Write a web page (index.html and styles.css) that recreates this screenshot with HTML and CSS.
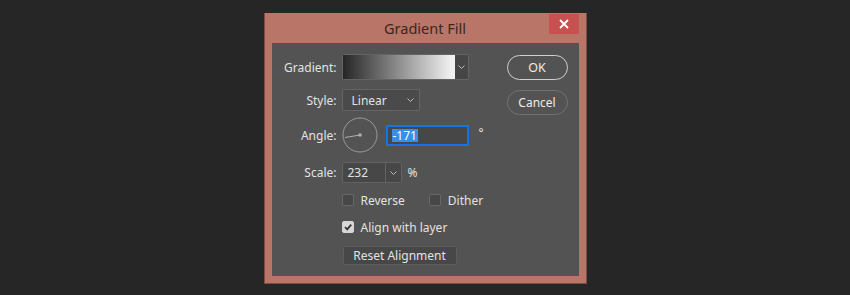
FILE: index.html
```html
<!doctype html>
<html lang="en">
<head>
    <meta charset="utf-8">
    <title>Gradient Fill</title>
    <link rel="stylesheet" href="styles.css">
</head>
<body class="ps-body">
<div class="ps-dialog">
    <div class="ps-titlebar">
        <span></span>
        <span class="ps-title">Gradient Fill</span>
        <button class="ps-close" aria-label="Close">
            <svg width="10" height="10" viewBox="0 0 10 10"><path d="M1 1 L9 9 M9 1 L1 9" stroke="#fff" stroke-width="1.8"/></svg>
        </button>
    </div>

    <div class="ps-panel">
        <div class="ps-form">
            <div class="ps-row ps-row-gradient">
                <span class="ps-label">Gradient:</span>
                <div class="ps-swatch">
                    <div class="ps-swatch-fill"></div>
                    <div class="ps-swatch-drop">
                        <svg width="7" height="4" viewBox="0 0 7 4"><polyline points="0.5,0.5 3.5,3.5 6.5,0.5" fill="none" stroke="#bdbdbd" stroke-width="1"/></svg>
                    </div>
                </div>
            </div>

            <div class="ps-row ps-row-style">
                <span class="ps-label">Style:</span>
                <div class="ps-select">
                    <span>Linear</span>
                    <svg width="7" height="4" viewBox="0 0 7 4"><polyline points="0.5,0.5 3.5,3.5 6.5,0.5" fill="none" stroke="#bdbdbd" stroke-width="1"/></svg>
                </div>
            </div>

            <div class="ps-row ps-row-angle">
                <span class="ps-label">Angle:</span>
                <svg class="ps-dial" width="36" height="36" viewBox="0 0 36 36">
                    <circle cx="18" cy="18" r="17" fill="none" stroke="#9a9a9a" stroke-width="1"/>
                    <line x1="18" y1="18" x2="3" y2="20.5" stroke="#b0b0b0" stroke-width="1"/>
                    <circle cx="18" cy="18" r="1.8" fill="#b0b0b0"/>
                </svg>
                <div class="ps-input ps-input-focus"><span class="ps-selected">-171</span></div>
                <span class="ps-unit ps-degree">°</span>
            </div>

            <div class="ps-row ps-row-scale">
                <span class="ps-label">Scale:</span>
                <div class="ps-combo">
                    <span class="ps-combo-value">232</span>
                    <span class="ps-combo-drop">
                        <svg width="7" height="4" viewBox="0 0 7 4"><polyline points="0.5,0.5 3.5,3.5 6.5,0.5" fill="none" stroke="#bdbdbd" stroke-width="1"/></svg>
                    </span>
                </div>
                <span class="ps-unit">%</span>
            </div>

            <div class="ps-checks ps-row-reverse">
                <label class="ps-check"><span class="ps-box"></span>Reverse</label>
                <label class="ps-check ps-check-dither"><span class="ps-box"></span>Dither</label>
            </div>

            <div class="ps-checks ps-row-align">
                <label class="ps-check">
                    <span class="ps-box ps-box-on">
                        <svg width="10" height="10" viewBox="0 0 10 10"><polyline points="2,5 4.2,7.4 8.2,2.6" fill="none" stroke="#333" stroke-width="1.8"/></svg>
                    </span>Align with layer
                </label>
            </div>

            <div class="ps-checks ps-row-reset">
                <button class="ps-reset">Reset Alignment</button>
            </div>
        </div>

        <div class="ps-buttons">
            <button class="ps-btn ps-btn-ok">OK</button>
            <button class="ps-btn ps-btn-cancel">Cancel</button>
        </div>
    </div>
</div>
</body>
</html>
```

FILE: styles.css
```css
.ps-body {
    margin: 0;
    background: #262626;
    font-family: "Noto Sans", "Open Sans", sans-serif;
    font-size: 12px;
    color: #e2e2e2;
}

.ps-dialog {
    width: 323px;
    margin: 13px auto 0;
    box-sizing: border-box;
    background: #b97567;
    border: 1px solid #7d4d44;
    border-top: 0;
    padding: 0 7px 7px;
}

.ps-titlebar {
    height: 30px;
    display: grid;
    grid-template-columns: 1fr auto 1fr;
    align-items: start;
}

.ps-title {
    font-size: 14.5px;
    color: #3b2722;
    line-height: 30px;
}

.ps-close {
    justify-self: end;
    width: 30px;
    height: 20px;
    margin-top: 1px;
    border: 0;
    padding: 0;
    background: #c75050;
    display: flex;
    align-items: center;
    justify-content: center;
}

.ps-panel {
    height: 233px;
    background: #535353;
    display: flex;
    box-sizing: border-box;
    padding-top: 11px;
}

.ps-form {
    width: 235px;
}

.ps-row {
    display: flex;
    align-items: center;
}

.ps-label {
    width: 65px;
    margin-right: 5px;
    text-align: right;
    flex: none;
}

.ps-row-gradient { height: 26px; }
.ps-row-style { height: 22px; margin-top: 9px; }
.ps-row-angle { height: 36px; margin-top: 6px; }
.ps-row-scale { height: 21px; margin-top: 9px; }

.ps-swatch {
    display: flex;
    width: 127px;
    height: 26px;
    box-sizing: border-box;
    border: 1px solid #646464;
    border-radius: 2px;
}

.ps-swatch-fill {
    flex: 1;
    background: linear-gradient(to right, #262626, #f1f1f1 97%);
}

.ps-swatch-drop {
    width: 13px;
    background: #464646;
    display: flex;
    align-items: center;
    justify-content: center;
}

.ps-select {
    width: 78px;
    height: 22px;
    box-sizing: border-box;
    border: 1px solid #656565;
    border-radius: 2px;
    background: #4a4a4a;
    display: flex;
    align-items: center;
    justify-content: space-between;
    padding: 0 5px 0 9px;
}

.ps-dial {
    flex: none;
}

.ps-input {
    width: 83px;
    height: 21px;
    margin-left: 8px;
    box-sizing: border-box;
    background: #474747;
    display: flex;
    align-items: center;
    padding-left: 4px;
}

.ps-input-focus {
    border: 2px solid #1473e6;
}

.ps-selected {
    background: #3a8ee6;
    color: #fff;
    line-height: 13px;
    padding: 0 1px;
}

.ps-unit {
    margin-left: 6px;
}

.ps-degree {
    margin-left: 10px;
    margin-top: -5px;
}

.ps-combo {
    display: flex;
    width: 60px;
    height: 21px;
    box-sizing: border-box;
    border: 1px solid #626262;
    border-radius: 2px;
    background: #474747;
}

.ps-combo-value {
    flex: 1;
    padding-left: 5px;
    line-height: 19px;
}

.ps-combo-drop {
    width: 15px;
    border-left: 1px solid #626262;
    display: flex;
    align-items: center;
    justify-content: center;
}

.ps-checks {
    display: flex;
    align-items: center;
    padding-left: 70px;
}

.ps-row-reverse { height: 12px; margin-top: 11px; }
.ps-row-align { height: 12px; margin-top: 15px; }
.ps-row-reset { height: 18px; margin-top: 13px; }

.ps-check {
    display: flex;
    align-items: center;
}

.ps-check-dither {
    margin-left: 24px;
}

.ps-box {
    width: 12px;
    height: 12px;
    box-sizing: border-box;
    border: 1px solid #686868;
    border-radius: 2px;
    background: #474747;
    margin-right: 7px;
    display: flex;
    align-items: center;
    justify-content: center;
}

.ps-box-on {
    background: #d6d6d6;
    border-color: #d6d6d6;
}

.ps-reset {
    width: 114px;
    height: 19px;
    margin-left: 1px;
    padding: 0;
    box-sizing: border-box;
    border: 1px solid #5c5c5c;
    border-radius: 2px;
    background: #474747;
    color: #e2e2e2;
    font: inherit;
}

.ps-buttons {
    display: flex;
    flex-direction: column;
    gap: 10px;
    padding-top: 1px;
}

.ps-btn {
    width: 61px;
    height: 25px;
    box-sizing: border-box;
    border-radius: 13px;
    background: #535353;
    color: #ececec;
    font: inherit;
    padding: 0;
}

.ps-btn-ok {
    border: 1.5px solid #cfcfcf;
    font-size: 12.5px;
}

.ps-btn-cancel {
    border: 1px solid #727272;
}
```
